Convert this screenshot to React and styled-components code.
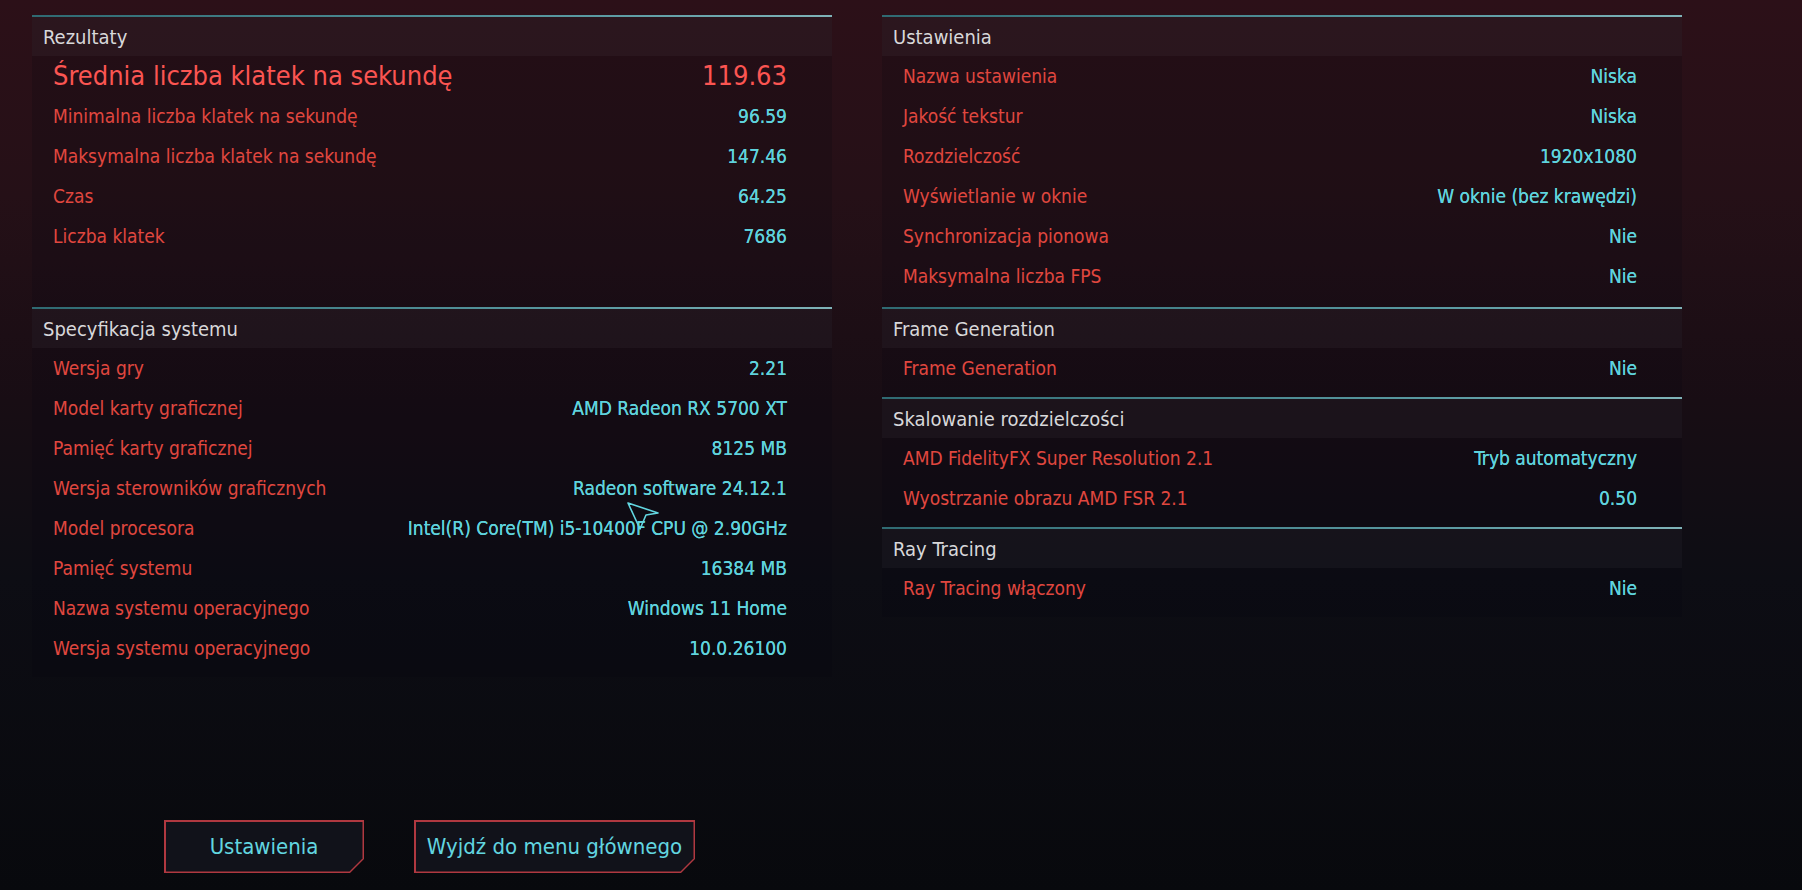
import React from "react";
import styled, { createGlobalStyle } from "styled-components";

const GlobalStyle = createGlobalStyle`
  html, body {
    margin: 0;
    padding: 0;
  }
  body {
    width: 1802px;
    height: 890px;
    overflow: hidden;
    background: linear-gradient(
      180deg,
      #2c1018 0%,
      #251017 22%,
      #180d14 45%,
      #0d0d14 65%,
      #08090d 100%
    );
    font-family: "Liberation Sans Narrow", "DejaVu Sans Condensed", "Liberation Sans", sans-serif;
  }
`;

const Screen = styled.div`
  position: relative;
  box-sizing: border-box;
  height: 890px;
  padding: 15px 0 17px 32px;
  display: flex;
  flex-direction: column;
`;

const Columns = styled.div`
  display: grid;
  grid-template-columns: 800px 800px;
  column-gap: 50px;
  align-items: start;
`;

const Column = styled.div`
  display: flex;
  flex-direction: column;
`;

const Section = styled.section`
  box-sizing: border-box;
  min-height: ${(p) => (p.$tall ? "292px" : "0")};
  padding-bottom: 9px;
  border-top: 2px solid transparent;
  border-image: linear-gradient(90deg, #2f6a72, #5a9aa2 70%, #7fb3b8) 1;
  background: rgba(8, 8, 16, 0.18);
`;

const SectionHeader = styled.h2`
  margin: 0;
  height: 39px;
  display: flex;
  align-items: center;
  padding-left: 11px;
  font-size: 20px;
  font-weight: 400;
  color: #d8d8da;
  background: rgba(255, 255, 255, 0.035);
`;

const Row = styled.div`
  height: 40px;
  display: flex;
  align-items: center;
  justify-content: space-between;
  padding: 0 45px 1px 21px;
  box-sizing: border-box;
  font-size: ${(p) => (p.$big ? "27px" : "19px")};
`;

const Label = styled.span`
  color: ${(p) => (p.$big ? "#fb5552" : "#e0473f")};
`;

const Value = styled.span`
  color: ${(p) => (p.$big ? "#fb5552" : "#5fd3dd")};
  text-shadow: ${(p) => (p.$big ? "none" : "0 0 0.6px #5fd3dd")};
`;

const Footer = styled.div`
  margin-top: auto;
  display: flex;
  gap: 50px;
  padding-left: 132px;
`;

const Button = styled.button`
  position: relative;
  box-sizing: border-box;
  width: ${(p) => p.$width}px;
  height: 53px;
  border: none;
  padding: 0;
  background: #b03840;
  clip-path: polygon(0 0, 100% 0, 100% calc(100% - 14px), calc(100% - 14px) 100%, 0 100%);
  font-family: inherit;
  font-size: 22px;
  color: #62d6e0;
  cursor: pointer;

  &::before {
    content: "";
    position: absolute;
    inset: 1.5px;
    background: #11121a;
    clip-path: polygon(0 0, 100% 0, 100% calc(100% - 13px), calc(100% - 13px) 100%, 0 100%);
  }

  span {
    position: relative;
  }
`;

const Cursor = styled.svg`
  position: absolute;
  left: 626px;
  top: 501px;
  width: 36px;
  height: 32px;
  pointer-events: none;
`;

const results = [
  ["Minimalna liczba klatek na sekundę", "96.59"],
  ["Maksymalna liczba klatek na sekundę", "147.46"],
  ["Czas", "64.25"],
  ["Liczba klatek", "7686"],
];

const system = [
  ["Wersja gry", "2.21"],
  ["Model karty graficznej", "AMD Radeon RX 5700 XT"],
  ["Pamięć karty graficznej", "8125 MB"],
  ["Wersja sterowników graficznych", "Radeon software 24.12.1"],
  ["Model procesora", "Intel(R) Core(TM) i5-10400F CPU @ 2.90GHz"],
  ["Pamięć systemu", "16384 MB"],
  ["Nazwa systemu operacyjnego", "Windows 11 Home"],
  ["Wersja systemu operacyjnego", "10.0.26100"],
];

const settings = [
  {
    title: "Ustawienia",
    tall: true,
    rows: [
      ["Nazwa ustawienia", "Niska"],
      ["Jakość tekstur", "Niska"],
      ["Rozdzielczość", "1920x1080"],
      ["Wyświetlanie w oknie", "W oknie (bez krawędzi)"],
      ["Synchronizacja pionowa", "Nie"],
      ["Maksymalna liczba FPS", "Nie"],
    ],
  },
  {
    title: "Frame Generation",
    rows: [["Frame Generation", "Nie"]],
  },
  {
    title: "Skalowanie rozdzielczości",
    rows: [
      ["AMD FidelityFX Super Resolution 2.1", "Tryb automatyczny"],
      ["Wyostrzanie obrazu AMD FSR 2.1", "0.50"],
    ],
  },
  {
    title: "Ray Tracing",
    rows: [["Ray Tracing włączony", "Nie"]],
  },
];

const Rows = ({ items }) =>
  items.map(([label, value]) => (
    <Row key={label}>
      <Label>{label}</Label>
      <Value>{value}</Value>
    </Row>
  ));

export default function App() {
  return (
    <>
      <GlobalStyle />
      <Screen>
        <Columns>
          <Column>
            <Section $tall>
              <SectionHeader>Rezultaty</SectionHeader>
              <Row $big>
                <Label $big>Średnia liczba klatek na sekundę</Label>
                <Value $big>119.63</Value>
              </Row>
              <Rows items={results} />
            </Section>
            <Section>
              <SectionHeader>Specyfikacja systemu</SectionHeader>
              <Rows items={system} />
            </Section>
          </Column>
          <Column>
            {settings.map((s) => (
              <Section key={s.title} $tall={s.tall}>
                <SectionHeader>{s.title}</SectionHeader>
                <Rows items={s.rows} />
              </Section>
            ))}
          </Column>
        </Columns>
        <Footer>
          <Button $width={200}>
            <span>Ustawienia</span>
          </Button>
          <Button $width={281}>
            <span>Wyjdź do menu głównego</span>
          </Button>
        </Footer>
        <Cursor viewBox="0 0 36 32">
          <path
            d="M2 2 L32 12 L20 14 L14 28 Z"
            fill="none"
            stroke="#62d6e0"
            strokeWidth="1.6"
            strokeLinejoin="round"
          />
        </Cursor>
      </Screen>
    </>
  );
}
